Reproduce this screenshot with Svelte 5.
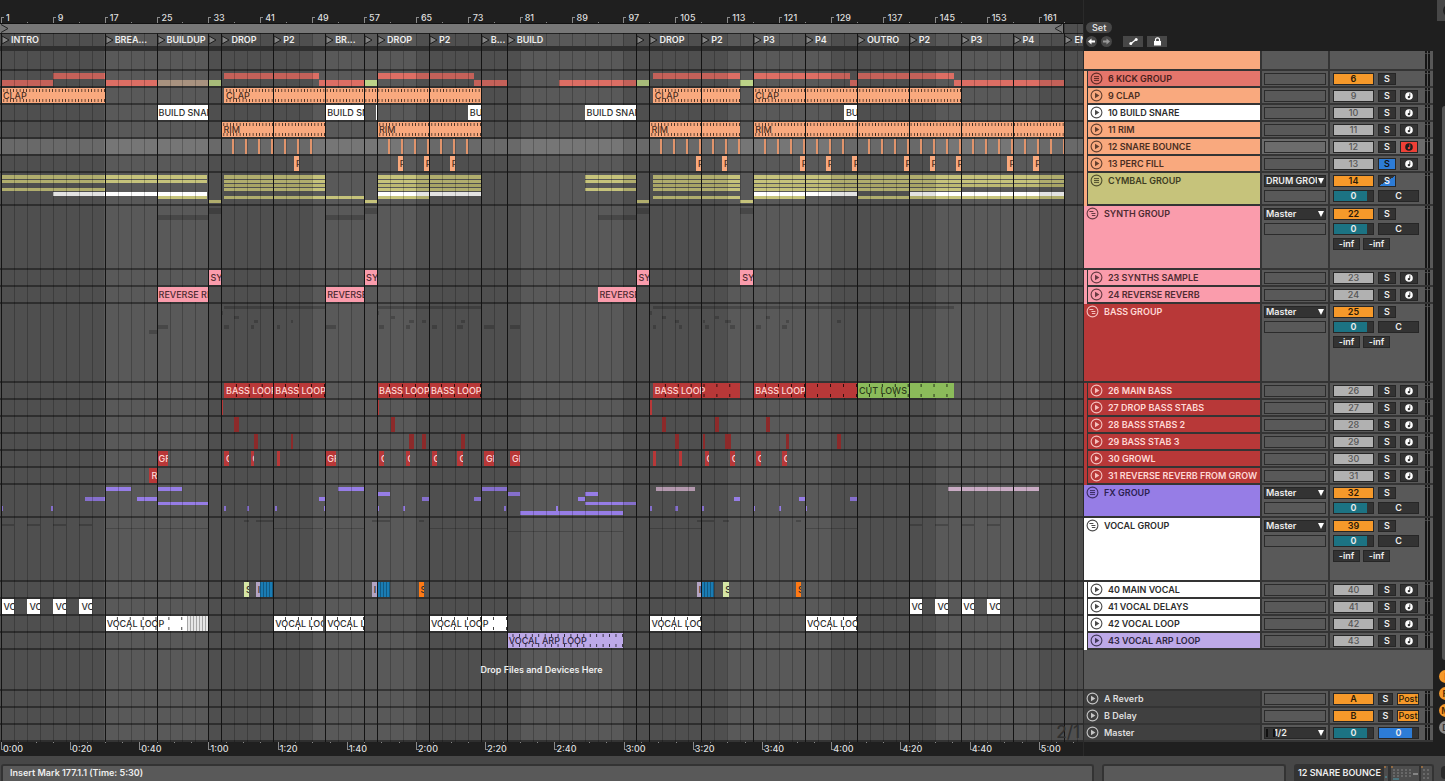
<script>
  const ORANGE = '#f9a97e';
  const PINK = '#fa9cac';
  const RED = '#b83838';
  const DARKRED = '#8c2a2a';
  const OLIVE = '#c6c37b';
  const KICK = '#dd6e64';
  const LIME = '#bcd388';
  const VIOLET = '#967de6';
  const LAVENDER = '#bda9e8';
  const LILAC = '#b3a4c4';
  const MAUVE = '#c9abc4';
  const BLUE = '#1a7cb4';
  const WHITE = '#ffffff';

  // The arrangement shows 167 bars, starting just before bar 1.
  const BARS = 167;
  const FIRST = 0.86;
  const pct = (bar) => ((bar - FIRST) / BARS) * 100;
  const span = (bars) => (bars / BARS) * 100;
  const range = (from, to, step) =>
    Array.from({ length: Math.floor((to - from) / step) + 1 }, (_, i) => from + i * step);

  const clips = (color, list, extra = {}) =>
    list.map(([a, b, label = '', over = {}]) => ({ a, b, label, color, ...extra, ...over }));
  const minis = (color, top, h, list) =>
    list.map(([a, b, c]) => ({ a, b, color: c ?? color, mini: true, top, h }));
  const ghosts = (top, h, list) => minis('rgba(0,0,0,0.2)', top, h, list);

  const locators = [
    [1, 'INTRO'], [17, 'BREA...'], [25, 'BUILDUP'], [33, ''], [35, 'DROP'], [43, 'P2'],
    [51, 'BR...'], [57, ''], [59, 'DROP'], [67, 'P2'], [75, 'B...'], [79, 'BUILD'],
    [99, ''], [101, 'DROP'], [109, 'P2'], [117, 'P3'], [125, 'P4'], [133, 'OUTRO'],
    [141, 'P2'], [149, 'P3'], [157, 'P4'], [165, 'END']
  ];

  const barMarks = range(1, 161, 8);
  const minorMarks = range(5, 165, 8);
  const gridMarks = range(1, 167, 2);
  const shades = [1, 33, 65, 97, 129, 161];

  const SECOND_BARS = 160.05 / 300;
  const timeMarks = range(0, 300, 20).map((s) => ({
    bar: 1 + s * SECOND_BARS,
    label: `${Math.floor(s / 60)}:${String(s % 60).padStart(2, '0')}`
  }));
  const timeMinor = range(0, 310, 5).map((s) => 1 + s * SECOND_BARS);

  const symbols = [...range(37, 49, 2), ...range(61, 73, 2), ...range(103, 115, 2),
    ...range(119, 131, 2), ...range(135, 165, 2)];
  const percs = [47, 63, 67, 71, 109, 113, 125, 129, 133, 141, 145, 149, 157, 161];

  const bassMain = [[35.4, 43], [43, 51], [59, 67], [67, 75], [101.5, 115], [117, 133]];
  const bassDrop = [[35, 35.3], [59, 59.3], [101, 101.4]];
  const bassStabs2 = [[37, 37.7], [61.1, 61.7], [103, 103.6], [111.1, 111.7], [119, 119.6]];
  const bassStab3 = [[40, 40.6], [45.7, 46.1], [64, 64.7], [66, 66.6], [72, 72.6], [105, 105.6],
    [109.2, 109.6], [112.6, 113.2], [113.3, 113.6], [122, 122.6], [130, 130.6]];
  const growl = [[25, 26.7], [35.4, 36.1], [39.5, 40.1], [43.5, 44], [51, 52.6], [59.3, 60],
    [63.4, 64.1], [67.4, 68.2], [71.4, 72.2], [75.5, 77], [79.5, 81], [101.5, 102],
    [105.5, 106], [109.5, 110.2], [113.4, 114.2], [117.4, 118.2], [121.4, 122.2]];
  const delays = [1, 5, 9, 13, 141, 145, 149, 153];
  const voxLoop = [[17, 33], [43, 50.7], [51, 57], [67, 79], [101, 109], [125, 133]];
  const voxMain = [[38.5, 39.2], [40.3, 43], [58.2, 61], [65.4, 66.2], [108.3, 111], [112.4, 113.3], [123.6, 124.3]];
  const cym = [[35.4, 51], [59, 75], [101.5, 115]];

  const tracks = [
    { kind: 'blank', h: 20, color: ORANGE, clips: [] },
    { kind: 'group', child: ORANGE, name: '6 KICK GROUP', num: '6', h: 17, color: '#e4756b', ink: '#4a1f1b', clips: [
      ...minis(KICK, 2, 6, [[9, 17], [35.4, 50], [59, 74], [101.5, 115], [117, 132], [133, 148]]),
      ...minis(KICK, 9, 6, [[1, 9], [17, 25], [25, 33, '#a8927f'], [33, 35, LIME], [50, 57], [57, 59, LIME],
        [74, 79], [87, 99], [99, 101, LIME], [115, 117, LIME], [132, 133], [148, 165]])
    ] },
    { kind: 'track', child: ORANGE, name: '9 CLAP', num: '9', h: 17, color: ORANGE, ink: '#4a2e22',
      clips: clips(ORANGE, [[1, 17, 'CLAP'], [35.4, 75, 'CLAP'], [101.5, 115, 'CLAP'], [117, 149, 'CLAP']], { tick: 0.5 }) },
    { kind: 'track', child: ORANGE, name: '10 BUILD SNARE', num: '10', h: 17, color: WHITE, ink: '#2c2c2c',
      clips: clips(WHITE, [[25, 33, 'BUILD SNARE'], [51, 57, 'BUILD SNARE'], [58.8, 59], [73, 75, 'BUILD'],
        [91, 99, 'BUILD SNARE'], [131, 133, 'BUILD']]) },
    { kind: 'track', child: ORANGE, name: '11 RIM', num: '11', h: 17, color: ORANGE, ink: '#4a2e22',
      clips: clips(ORANGE, [[35, 51, 'RIM'], [59, 75, 'RIM'], [101, 115, 'RIM'], [117, 165, 'RIM']], { tick: 0.5 }) },
    { kind: 'track', child: ORANGE, name: '12 SNARE BOUNCE', num: '12', h: 17, color: ORANGE, ink: '#4a2e22', selected: true, armed: true,
      clips: clips('#e0946c', symbols.map((b) => [b - 0.3, b])) },
    { kind: 'track', child: ORANGE, name: '13 PERC FILL', num: '13', h: 17, color: ORANGE, ink: '#4a2e22', solo: true,
      clips: clips(ORANGE, percs.map((b) => [b - 0.8, b, 'PERC'])) },
    { kind: 'group', child: ORANGE, name: 'CYMBAL GROUP', num: '14', h: 33, color: OLIVE, ink: '#3d3c22', out: 'DRUM GROUP', halfSolo: true, clips: [
      ...minis(OLIVE, 2, 4, [[1, 32.8], ...cym, [91, 99], [117, 165]]),
      ...minis(OLIVE, 7, 3, [[1, 32.8], ...cym, [91, 99], [117, 165]]),
      ...minis('#bdb972', 11, 3, [...cym, [117, 165]]),
      ...minis(OLIVE, 15, 3, [[1, 17], ...cym, [91, 99], [117, 149]]),
      ...minis(WHITE, 19, 4, [[9, 32.8], [59, 75], [117, 133], [141, 165]]),
      ...minis(OLIVE, 23, 3, [[25, 32.8], [35.4, 57], [59, 67], [101.5, 115], [117, 125], [133, 165]]),
      ...minis(OLIVE, 27, 3, [[33, 35], [57, 59], [99, 101], [115, 117]])
    ] },
    { kind: 'open', name: 'SYNTH GROUP', num: '22', h: 64, color: PINK, ink: '#4e2b31', out: 'Master', clips: [
      ...ghosts(2, 6, [[33, 35], [57, 59], [99, 101], [115, 117]]),
      ...ghosts(9, 5, [[25, 33], [51, 57], [93, 99]])
    ] },
    { kind: 'track', child: PINK, name: '23 SYNTHS SAMPLE', num: '23', h: 17, color: PINK, ink: '#4e2b31',
      clips: clips(PINK, [33, 57, 99, 115].map((b) => [b, b + 2, 'SYNTHS'])) },
    { kind: 'track', child: PINK, name: '24 REVERSE REVERB', num: '24', h: 17, color: PINK, ink: '#4e2b31',
      clips: clips(PINK, [[25, 33, 'REVERSE REVERB'], [51, 57, 'REVERSE REVERB'], [93, 99, 'REVERSE REVERB']]) },
    { kind: 'open', name: 'BASS GROUP', num: '25', h: 79, color: RED, ink: '#ffd9d6', out: 'Master', clips: [
      ...ghosts(2, 3, [[35.4, 51], [59, 75], [101.5, 148]]),
      ...ghosts(7, 4, bassDrop), ...ghosts(12, 3, bassStabs2), ...ghosts(16, 3, bassStab3),
      ...ghosts(21, 4, growl), ...ghosts(26, 4, [[23.9, 25]])
    ] },
    { kind: 'track', child: RED, name: '26 MAIN BASS', num: '26', h: 17, color: RED, ink: '#ffd9d6', clips: [
      ...clips(RED, bassMain.map(([a, b]) => [a, b, 'BASS LOOP']), { tick: 2 }),
      ...clips('#8bbb5a', [[133, 148, 'CUT LOWS']], { tick: 2, ink: '#2c3b1c' })
    ] },
    { kind: 'track', child: RED, name: '27 DROP BASS STABS', num: '27', h: 17, color: RED, ink: '#ffd9d6', clips: clips(RED, bassDrop) },
    { kind: 'track', child: RED, name: '28 BASS STABS 2', num: '28', h: 17, color: RED, ink: '#ffd9d6', clips: clips(DARKRED, bassStabs2) },
    { kind: 'track', child: RED, name: '29 BASS STAB 3', num: '29', h: 17, color: RED, ink: '#ffd9d6', clips: clips(DARKRED, bassStab3) },
    { kind: 'track', child: RED, name: '30 GROWL', num: '30', h: 17, color: RED, ink: '#ffd9d6',
      clips: clips(RED, growl.map(([a, b]) => [a, b, b - a > 0.55 ? 'GROWL' : ''])) },
    { kind: 'track', child: RED, name: '31 REVERSE REVERB FROM GROW', num: '31', h: 17, color: RED, ink: '#ffd9d6',
      clips: clips(RED, [[23.9, 25, 'REV']]) },
    { kind: 'group', name: 'FX GROUP', num: '32', h: 33, color: VIOLET, ink: '#2c2150', out: 'Master', clips: [
      ...minis(VIOLET, 2, 4, [[17, 21], [25, 29], [53, 57], [75, 79], [102, 108, MAUVE], [147, 161, MAUVE]]),
      ...minis(VIOLET, 7, 4, [[59, 61], [79, 81], [91, 93]]),
      ...minis(VIOLET, 12, 4, [[14, 17], [22, 25], [50, 51], [66, 67], [74, 75], [90, 91], [114, 115], [124, 125], [132, 133]]),
      ...minis(VIOLET, 17, 3, [[25, 33], [91, 99]]),
      ...minis(VIOLET, 21, 5, [1, 8.7, 35.4, 38.9, 43.2, 50.8, 59, 63, 78.6, 86.6, 101, 105, 109, 117, 121, 125].map((b) => [b, b + 0.35])),
      ...minis(VIOLET, 26, 4, [[81, 97]])
    ] },
    { kind: 'open', name: 'VOCAL GROUP', num: '39', h: 64, color: WHITE, ink: '#2c2c2c', out: 'Master', clips: [
      ...ghosts(2, 2, voxMain),
      ...ghosts(6, 2, delays.map((b) => [b, b + 2])),
      ...ghosts(10, 1, voxLoop),
      ...ghosts(13, 1, [[79, 97]])
    ] },
    { kind: 'track', child: WHITE, name: '40 MAIN VOCAL', num: '40', h: 17, color: WHITE, ink: '#2c2c2c', clips: [
      ...clips('#d5e6a5', [[38.5, 39.2, 'S'], [112.4, 113.3, 'S']]),
      ...clips(LILAC, [[40.3, 41, 'I'], [58.2, 59, 'I'], [108.3, 109, 'I']]),
      ...clips(BLUE, [[41, 43], [59, 61], [109, 111]], { hatch: true }),
      ...clips('#ff7a14', [[65.4, 66.2, 'S'], [123.6, 124.3, 'S']])
    ] },
    { kind: 'track', child: WHITE, name: '41 VOCAL DELAYS', num: '41', h: 17, color: WHITE, ink: '#2c2c2c',
      clips: clips(WHITE, delays.map((b) => [b + 0.1, b + 2, 'VOCAL'])) },
    { kind: 'track', child: WHITE, name: '42 VOCAL LOOP', num: '42', h: 17, color: WHITE, ink: '#2c2c2c', clips: [
      ...clips(WHITE, voxLoop.map(([a, b]) => [a, b, 'VOCAL LOOP']), { tick: 2 }),
      ...clips('#e6e6e6', [[29.7, 33]], { hatch: true })
    ] },
    { kind: 'track', child: WHITE, name: '43 VOCAL ARP LOOP', num: '43', h: 17, color: LAVENDER, ink: '#2d2640',
      clips: clips(LAVENDER, [[79, 97, 'VOCAL ARP LOOP']], { tick: 1 }) },
    { kind: 'drop', h: 41, clips: [] },
    { kind: 'return', name: 'A Reverb', num: 'A', h: 17, clips: [] },
    { kind: 'return', name: 'B Delay', num: 'B', h: 17, clips: [] },
    { kind: 'master', name: 'Master', h: 17, clips: [] }
  ];

  const sideToggles = [['I', true], ['R', true], ['M', true], ['D', false]];
</script>

{#snippet trackIcon(kind)}
  <svg class="ticon" viewBox="0 0 13 13" aria-hidden="true">
    <circle cx="6.5" cy="6.5" r="5.4" fill="none" stroke="currentColor" stroke-width="1.1" />
    {#if kind === 'group'}
      <path d="M4 4.6H9M4 6.5H9M4 8.4H9" stroke="currentColor" stroke-width="1" />
    {:else if kind === 'open'}
      <path d="M3.4 4.5H7.4M5.4 6.5H9.4M5.9 8.5H9.4" stroke="currentColor" stroke-width="1" />
    {:else}
      <path d="M5 3.7L9.4 6.5L5 9.3Z" fill="currentColor" />
    {/if}
  </svg>
{/snippet}

<div class="app">
  <main>
    <section class="arrange" aria-label="Arrangement">
      <div class="ruler">
        {#each barMarks as b}
          <span class="mark" style="left:{pct(b)}%">{b}</span>
        {/each}
        {#each minorMarks as b}
          <i class="minor" style="left:{pct(b)}%"></i>
        {/each}
      </div>

      <div class="canvas">
        <div class="grid" aria-hidden="true">
          {#each shades as b}
            <i class="shade" style="left:{pct(b === 1 ? FIRST : b)}%;width:{span(16)}%"></i>
          {/each}
          {#each gridMarks as b}
            <i class="line" style="left:{pct(b)}%"></i>
          {/each}
        </div>
        <div class="locs" aria-hidden="true">
          {#each locators as [b]}
            <i class="locline" style="left:{pct(b)}%"></i>
          {/each}
        </div>

        <div class="loop">
          <div class="brace" style="width:{pct(165)}%">
            <svg viewBox="0 0 9 9"><path d="M1 0.5L8 4.5L1 8.5" fill="none" stroke="#222" /></svg>
            <svg viewBox="0 0 9 9"><path d="M8 0.5L1 4.5L8 8.5" fill="none" stroke="#222" /></svg>
          </div>
        </div>
        <div class="locators">
          {#each locators as [b, label]}
            <button class="locator" style="left:{pct(b)}%" aria-label={label || 'Locator'}>
              <svg viewBox="0 0 9 10"><path d="M1 1L8 5L1 9Z" fill="#858585" stroke="#1c1c1c" /></svg>{label}
            </button>
          {/each}
        </div>
        <div class="band"></div>

        {#each tracks as t}
          <div class="lane" class:selected={t.selected} style="height:{t.h}px">
            {#each t.clips as c}
              {#if c.mini}
                <div class="mini" style="left:{pct(c.a)}%;width:{span(c.b - c.a)}%;top:{c.top}px;height:{c.h}px;background:{c.color}"></div>
              {:else}
                <div
                  class="clip"
                  class:ticks={c.tick}
                  class:hatch={c.hatch}
                  style="left:{pct(c.a)}%;width:{span(c.b - c.a)}%;background-color:{c.color};color:{c.ink ?? t.ink};--tick:{c.tick ? (c.tick / (c.b - c.a)) * 100 : 100}%"
                >{c.label}</div>
              {/if}
            {/each}
            {#if t.kind === 'drop'}<p class="hint">Drop Files and Devices Here</p>{/if}
            {#if t.kind === 'master'}<span class="zoom">2/1</span>{/if}
          </div>
        {/each}
      </div>

      <div class="timeruler">
        {#each timeMarks as m}
          <span class="tmark" style="left:{pct(m.bar)}%">{m.label}</span>
        {/each}
        {#each timeMinor as b}
          <i class="tminor" style="left:{pct(b)}%"></i>
        {/each}
      </div>
    </section>

    <section class="mixer" aria-label="Tracks">
      <div class="tools">
        <button class="set">Set</button>
        <div class="toolrow">
          <button class="round" aria-label="Previous locator">
            <svg viewBox="0 0 11 11"><path d="M2 5.5L5.5 2.5V4.6H9V6.4H5.5V8.5Z" fill="#fff" /></svg>
          </button>
          <button class="round" aria-label="Next locator">
            <svg viewBox="0 0 11 11"><path d="M9 5.5L5.5 2.5V4.6H2V6.4H5.5V8.5Z" fill="#999" /></svg>
          </button>
          <button class="tool" aria-label="Automation mode">
            <svg viewBox="0 0 11 9"><path d="M3 6.5L8 2.5" stroke="#fff" stroke-width="1.2" /><circle cx="2.8" cy="6.6" r="1.5" fill="#fff" /><circle cx="8.2" cy="2.4" r="1.5" fill="#fff" /></svg>
          </button>
          <button class="tool" aria-label="Lock envelopes">
            <svg viewBox="0 0 11 9"><rect x="2" y="4" width="7" height="4.5" fill="#fff" /><path d="M3.5 4V2.8A2 2 0 0 1 7.5 2.8V4" fill="none" stroke="#fff" stroke-width="1.2" /></svg>
          </button>
        </div>
      </div>

      {#each tracks as t}
        {#if t.kind === 'drop'}
          <div class="row empty" style="height:{t.h}px"></div>
        {:else}
          <div class="row" class:selected={t.selected} style="height:{t.h}px">
            {#if t.child}<i class="stripe" style="background:{t.child}"></i>{/if}
            <div class="name" style="background-color:{t.color ?? '#404040'};color:{t.ink ?? '#dedede'}">
              {#if t.name}{@render trackIcon(t.kind)}<span>{t.name}</span>{/if}
            </div>
            <div class="io">
              {#if t.out}
                <div class="pick"><select aria-label="{t.name} output"><option>{t.out}</option></select></div>
              {/if}
              {#if t.kind === 'master'}
                <div class="pick cue"><select aria-label="Cue output"><option>1/2</option></select></div>
              {:else if t.kind !== 'blank'}
                <div class="slot"></div>
              {/if}
            </div>
            <div class="mix">
              <div class="controls">
                {#if t.kind === 'master'}
                  <div class="line1">
                    <button class="vol wide" aria-label="Master volume">0</button>
                    <button class="vol cuevol wide" aria-label="Cue volume">0</button>
                  </div>
                {:else if t.kind !== 'blank'}
                  <div class="line1">
                    <button class="num wide" class:on={t.kind !== 'track'} aria-label="{t.name} activator">{t.num}</button>
                    <button class="btn s" class:narrow={t.kind === 'return'} class:solo={t.solo} class:half={t.halfSolo} aria-label="Solo {t.name}">S</button>
                    {#if t.kind === 'track'}
                      <button class="btn rec" class:armed={t.armed} aria-label="Arm {t.name}">
                        <svg viewBox="0 0 8 8"><circle cx="4" cy="4" r="3.8" fill={t.armed ? '#1c1c1c' : '#fff'} /><path d="M4.8 1.4V5" stroke={t.armed ? '#ee4036' : '#2e2e2e'} stroke-width="0.9" /><circle cx="3.9" cy="5.1" r="1.2" fill={t.armed ? '#ee4036' : '#2e2e2e'} /></svg>
                      </button>
                    {:else if t.kind === 'return'}
                      <button class="post">Post</button>
                    {/if}
                  </div>
                {/if}
                {#if t.out}
                  <div class="line1">
                    <button class="vol wide" aria-label="{t.name} volume">0</button>
                    <button class="btn wide" aria-label="{t.name} pan">C</button>
                  </div>
                {/if}
                {#if t.kind === 'open'}
                  <div class="line1 infs"><span class="inf">-inf</span><span class="inf">-inf</span></div>
                {/if}
              </div>
              <div class="meter"><i></i><i></i></div>
            </div>
          </div>
        {/if}
      {/each}
    </section>

    <aside>
      <button class="knob" aria-label="Overview"><i></i></button>
      <div class="scroll"></div>
      {#each sideToggles as [l, on]}
        <button class="side" class:on>{l}</button>
      {/each}
    </aside>
  </main>

  <footer>
    <div class="box status">Insert Mark 177.1.1 (Time: 5:30)</div>
    <div class="box mid"></div>
    <div class="box device">
      <span>12 SNARE BOUNCE</span>
      <svg viewBox="0 0 48 15" aria-hidden="true">
        <rect width="4" height="15" fill="#4d4d4d" /><rect x="7" width="28" height="15" fill="#4d4d4d" /><rect x="37" width="11" height="15" fill="#4d4d4d" />
        <path d="M0 1H2M7 1H9M37 1H39" stroke="#d98a3a" />
        <path d="M9 4H27M9 7H27M9 10H27M39 4H46M39 8H46M39 12H46" stroke="#858585" stroke-dasharray="2 2" />
        <path d="M9 13H15M1 11H3" stroke="#4f9fb0" /><path d="M29 8H34" stroke="#858585" stroke-width="2" />
      </svg>
    </div>
    <i class="dot"></i>
  </footer>
</div>

<style>
  :global(body) {
    background: #474747;
    overflow: hidden;
  }
  .app {
    font-family: Inter, 'Liberation Sans', sans-serif;
    font-size: 9px;
    font-weight: 600;
    line-height: 12px;
    color: #dedede;
    min-height: 100vh;
    display: flex;
    flex-direction: column;
  }
  .app * {
    box-sizing: border-box;
  }
  button,
  select {
    font: inherit;
    color: inherit;
    margin: 0;
    padding: 0;
    border: 0;
    background: none;
    border-radius: 0;
    display: flex;
    align-items: center;
    justify-content: center;
  }
  main {
    display: flex;
    background: #1f1f1f;
    overflow: hidden;
  }
  .arrange {
    flex: 1;
    min-width: 0;
    overflow: hidden;
    border-right: 1px solid #2a2a2a;
  }
  .ruler {
    height: 24px;
    position: relative;
    border-bottom: 1px solid #111;
    font-weight: 500;
  }
  .mark {
    position: absolute;
    top: 12px;
    padding-left: 5px;
  }
  .mark::before {
    content: '';
    position: absolute;
    left: 0;
    bottom: 1px;
    width: 2px;
    height: 5px;
    border-left: 1px solid #8a8a8a;
    border-top: 1px solid #8a8a8a;
  }
  .minor {
    position: absolute;
    bottom: 0;
    width: 1px;
    height: 1px;
    background: #8a8a8a;
  }
  .canvas {
    position: relative;
    isolation: isolate;
    background: #595959;
  }
  .grid,
  .locs {
    position: absolute;
    inset: 0;
    z-index: 1;
    overflow: hidden;
    pointer-events: none;
  }
  .locs {
    z-index: 3;
    top: 10px;
  }
  .grid i,
  .locs i {
    position: absolute;
    top: 0;
    bottom: 0;
  }
  .shade {
    background: rgba(0, 0, 0, 0.11);
  }
  .line {
    width: 1px;
    background: rgba(0, 0, 0, 0.22);
  }
  .locline {
    width: 1px;
    background: #131313;
  }
  .loop {
    height: 10px;
    border-bottom: 1px solid #222;
  }
  .brace {
    position: relative;
    z-index: 2;
    height: 9px;
    display: flex;
    justify-content: space-between;
    background: #777;
    border-right: 1px solid #111;
  }
  .brace svg {
    width: 9px;
    height: 9px;
  }
  .locators {
    position: relative;
    z-index: 4;
    height: 12px;
    overflow: hidden;
  }
  .locator {
    position: absolute;
    top: 0;
    height: 12px;
    gap: 1px;
    line-height: 14px;
    color: #eee;
    white-space: nowrap;
  }
  .locator svg {
    width: 9px;
    height: 10px;
  }
  .band {
    position: relative;
    z-index: 2;
    height: 5px;
    background: #2f2f2f;
  }
  .lane {
    position: relative;
    border-bottom: 2px solid #343434;
  }
  .lane.selected {
    background: #767676;
  }
  .mini {
    position: absolute;
  }
  .clip {
    position: absolute;
    z-index: 2;
    top: 0;
    bottom: 0;
    padding-left: 2px;
    font-weight: 500;
    line-height: 16px;
    white-space: nowrap;
    overflow: hidden;
  }
  .ticks::before,
  .ticks::after {
    content: '';
    position: absolute;
    left: 0;
    right: 0;
    top: 1px;
    height: 3px;
    background: linear-gradient(to left, rgba(0, 0, 0, 0.75) 1px, transparent 1px);
    background-size: var(--tick) 100%;
  }
  .ticks::after {
    top: auto;
    bottom: 1px;
  }
  .hatch {
    background-image: repeating-linear-gradient(90deg, rgba(0, 0, 0, 0.28) 0 1px, transparent 1px 3px);
  }
  .hint {
    position: relative;
    z-index: 4;
    margin: 0;
    line-height: 39px;
    text-align: center;
    color: #eee;
  }
  .zoom {
    position: absolute;
    z-index: 4;
    right: 3px;
    bottom: 0;
    font-size: 17px;
    font-weight: 500;
    line-height: 16px;
    color: #303030;
  }
  .timeruler {
    position: relative;
    height: 14px;
    font-weight: 500;
  }
  .tmark {
    position: absolute;
    top: 0;
    padding-left: 2px;
    line-height: 13px;
  }
  .tmark::before {
    content: '';
    position: absolute;
    left: 0;
    top: 0;
    width: 2px;
    height: 7px;
    border-left: 1px solid #8a8a8a;
    border-bottom: 1px solid #8a8a8a;
  }
  .tminor {
    position: absolute;
    top: 0;
    width: 1px;
    height: 1px;
    background: #8a8a8a;
  }
  .mixer {
    width: 349px;
    flex: none;
    display: flex;
    flex-direction: column;
  }
  .tools {
    height: 51px;
    padding: 22px 2px 0;
  }
  .set {
    background: #474747;
    border-radius: 6px;
    height: 11px;
    padding: 0 6px;
  }
  .toolrow {
    display: flex;
    gap: 4px;
    margin-top: 3px;
  }
  .round {
    width: 11px;
    height: 11px;
    border-radius: 50%;
    background: #474747;
  }
  .round svg {
    width: 11px;
    height: 11px;
  }
  .tool {
    width: 20px;
    height: 11px;
    background: #474747;
  }
  .round + .tool {
    margin-left: 7px;
  }
  .tool svg {
    width: 11px;
    height: 9px;
  }
  .row {
    display: flex;
    background: #343434;
  }
  .row.empty {
    background: #595959;
    border-bottom: 2px solid #343434;
  }
  .stripe {
    width: 3px;
    margin-right: 1px;
  }
  .name {
    flex: 1;
    min-width: 0;
    border-bottom: 2px solid #343434;
    display: flex;
    align-items: flex-start;
    gap: 5px;
    padding: 1px 0 0 2px;
    white-space: nowrap;
    overflow: hidden;
  }
  .name span {
    line-height: 14px;
  }
  .ticon {
    width: 13px;
    height: 13px;
    flex: none;
    opacity: 0.85;
  }
  .io,
  .mix {
    margin-left: 2px;
    margin-bottom: 2px;
    background: #595959;
    padding-top: 2px;
    display: flex;
  }
  .selected .io,
  .selected .mix {
    background: #6c6c6c;
  }
  .io {
    width: 66px;
    flex-direction: column;
    gap: 3px;
    padding-left: 2px;
    padding-right: 2px;
  }
  .slot {
    height: 12px;
    border: 1px solid #2b2b2b;
  }
  .pick {
    position: relative;
    height: 12px;
    background: #333;
    border: 1px solid #262626;
  }
  .pick select {
    appearance: none;
    width: 100%;
    height: 10px;
    line-height: 10px;
    padding: 0 8px 0 1px;
    color: #eee;
  }
  .pick.cue select {
    padding-left: 9px;
  }
  .pick.cue::before {
    content: '';
    position: absolute;
    left: 1px;
    top: 1px;
    width: 5px;
    height: 8px;
    border-left: 2px solid #111;
    border-right: 2px solid #111;
  }
  .pick::after {
    content: '';
    position: absolute;
    right: 1px;
    top: 2px;
    border: 3px solid transparent;
    border-top: 6px solid #fff;
    border-bottom: 0;
  }
  .mix {
    width: 103px;
    padding-left: 3px;
    padding-right: 3px;
    justify-content: space-between;
  }
  .controls {
    display: flex;
    flex-direction: column;
    gap: 3px;
  }
  .line1 {
    display: flex;
    gap: 4px;
    height: 12px;
  }
  .infs {
    gap: 3px;
  }
  .num,
  .btn,
  .vol,
  .inf,
  .post {
    height: 12px;
    border: 1px solid #262626;
    background: #333;
    color: #eee;
    line-height: 10px;
  }
  .wide {
    width: 41px;
  }
  .num {
    background: #b1b1b1;
    color: #555;
    font-weight: 500;
  }
  .num.on {
    background: #f6992a;
    color: #2a1a08;
    font-weight: 600;
  }
  .s,
  .rec {
    width: 18px;
  }
  .narrow {
    width: 15px;
  }
  .post {
    width: 22px;
    background: #f6992a;
    color: #2a1a08;
    font-weight: 500;
  }
  .solo {
    background: #2d7cd6;
    color: #111;
  }
  .half {
    background: linear-gradient(to bottom right, #333 50%, #2d7cd6 50%);
  }
  .armed {
    background: #ee4036;
  }
  .rec svg {
    width: 8px;
    height: 8px;
  }
  .vol {
    background: linear-gradient(90deg, #1c7383 84%, #333 84%);
  }
  .cuevol {
    background: linear-gradient(90deg, #2d7cd6 84%, #333 84%);
  }
  .inf {
    width: 27px;
    text-align: center;
  }
  .meter {
    display: flex;
    gap: 1px;
    margin-top: -2px;
    align-self: stretch;
  }
  .meter i {
    width: 2px;
    background: linear-gradient(#151515 2px, #444 2px 3px, #151515 3px);
  }
  aside {
    width: 12px;
    flex: none;
    display: flex;
    flex-direction: column;
    overflow: hidden;
    padding-bottom: 22px;
  }
  .knob {
    width: 20px;
    height: 21px;
    margin-left: 4px;
    margin-bottom: 85px;
    background: #474747;
  }
  .knob i {
    width: 13px;
    height: 13px;
    border-radius: 50%;
    background: #222;
    margin-left: 4px;
  }
  .scroll {
    flex: 1;
    width: 8px;
    margin-left: 9px;
    margin-bottom: 10px;
    border-radius: 3px;
    background: #555;
  }
  .side {
    width: 13px;
    height: 13px;
    margin-left: 6px;
    margin-bottom: 4px;
    flex: none;
    border-radius: 50%;
    background: #8a8a8a;
    color: #333;
  }
  .side:last-child {
    margin-bottom: 0;
  }
  .side.on {
    background: #f6992a;
    color: #4a2a08;
  }
  footer {
    display: flex;
    flex: 1;
    gap: 8px;
    padding-top: 8px;
    background: #474747;
    overflow: hidden;
  }
  .box {
    background: #595959;
    border: 2px solid #333;
    border-bottom: 0;
    border-radius: 3px 3px 0 0;
    line-height: 14px;
    color: #eee;
  }
  .status {
    flex: 1;
    padding-left: 7px;
    margin-left: 1px;
  }
  .mid {
    width: 184px;
  }
  .device {
    width: 140px;
    display: flex;
    justify-content: space-between;
    padding-left: 2px;
    background: #333;
    white-space: nowrap;
    overflow: hidden;
  }
  .device svg {
    width: 48px;
    height: 15px;
    flex: none;
  }
  .dot {
    width: 4px;
    height: 13px;
    background: #2a2a2a;
    border-radius: 6px 0 0 6px;
    margin-top: 2px;
    margin-left: -1px;
  }
</style>
